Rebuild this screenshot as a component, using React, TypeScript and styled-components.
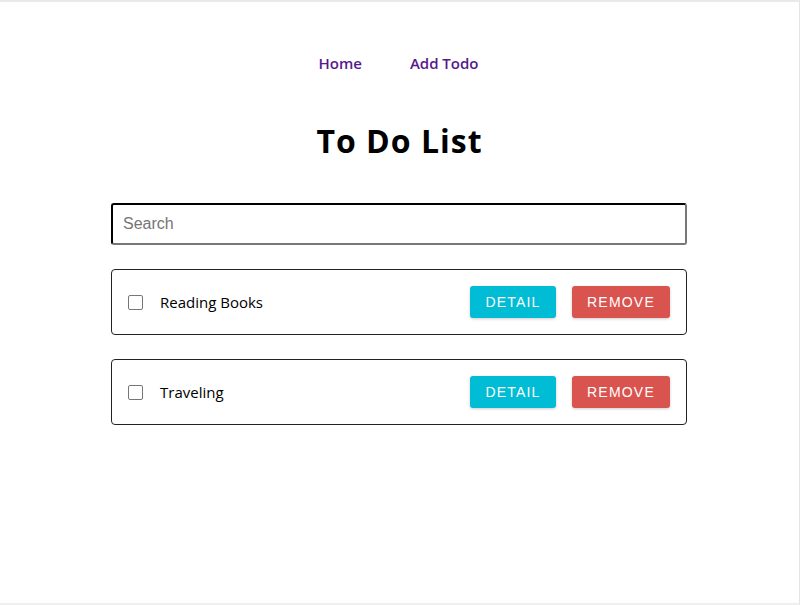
import React from "react";
import styled, { createGlobalStyle } from "styled-components";

const Global = createGlobalStyle`
  html, body { margin: 0; padding: 0; background: #fff; }
  body { font-family: "Open Sans", "Noto Sans", sans-serif; color: #000; }
  * { box-sizing: border-box; }
`;

const Frame = styled.div`
  width: 800px;
  height: 605px;
  border-top: 2px solid #e9e9e9;
  border-right: 1px solid #e4e4e4;
  border-bottom: 2px solid #efefef;
  display: flex;
  flex-direction: column;
  align-items: center;
`;

const Nav = styled.nav`
  display: flex;
  gap: 48px;
  margin-top: 50px;
  margin-left: -2px;
`;

const NavLink = styled.a`
  color: #551a8b;
  font-size: 15px;
  font-weight: 600;
  text-decoration: none;
  line-height: 22px;
`;

const Title = styled.h1`
  margin: 45px 0 0;
  font-size: 32px;
  font-weight: 700;
  letter-spacing: 1px;
  line-height: 44px;
`;

const Content = styled.div`
  align-self: stretch;
  margin: 40px 112px 0 111px;
  display: flex;
  flex-direction: column;
  gap: 24px;
`;

const Search = styled.input`
  height: 42px;
  width: 100%;
  padding: 0 10px;
  border: 2px inset #767676;
  border-top-color: #111;
  border-left-color: #111;
  border-right-color: #777;
  border-bottom-color: #777;
  border-radius: 3px;
  font-family: "Liberation Sans", Arial, sans-serif;
  font-size: 16px;
  &::placeholder { color: #757575; }
  outline: none;
`;

const Card = styled.div`
  height: 66px;
  border: 1px solid #222;
  border-radius: 4px;
  display: flex;
  align-items: center;
  padding: 0 16px 0 16px;
`;

const Check = styled.span`
  width: 15px;
  height: 15px;
  border: 1px solid #767676;
  border-radius: 2px;
  flex: none;
`;

const Label = styled.span`
  margin-left: 17px;
  font-size: 15px;
  flex: 1;
`;

const Button = styled.button<{ $bg: string; $w: number }>`
  width: ${(p) => p.$w}px;
  height: 32px;
  border: none;
  border-radius: 3px;
  background: ${(p) => p.$bg};
  color: #fff;
  font-family: "Liberation Sans", Arial, sans-serif;
  font-size: 14px;
  letter-spacing: 1.2px;
  text-transform: uppercase;
  box-shadow: 0 1px 3px rgba(0, 0, 0, 0.2);
  padding: 0;
  & + & { margin-left: 16px; }
`;

const todos = ["Reading Books", "Traveling"];

export default function App() {
  return (
    <>
      <Global />
      <Frame>
        <Nav>
          <NavLink href="#">Home</NavLink>
          <NavLink href="#">Add Todo</NavLink>
        </Nav>
        <Title>To Do List</Title>
        <Content>
          <Search placeholder="Search" />
          {todos.map((t) => (
            <Card key={t}>
              <Check />
              <Label>{t}</Label>
              <Button $bg="#00bcd4" $w={86}>Detail</Button>
              <Button $bg="#d9534f" $w={98}>Remove</Button>
            </Card>
          ))}
        </Content>
      </Frame>
    </>
  );
}
